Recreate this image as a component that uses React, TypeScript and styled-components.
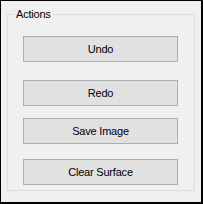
import React from "react";
import styled, { createGlobalStyle } from "styled-components";

const Global = createGlobalStyle`
  html, body { margin: 0; padding: 0; background: #f0f0f0; }
  * { box-sizing: border-box; }
`;

const Window = styled.div`
  width: 203px;
  height: 204px;
  background: #f0f0f0;
  border-style: solid;
  border-color: #000;
  border-width: 1px 2px 2px 1px;
  padding: 13px 6px 0 6px;
  font-family: "Liberation Sans", Arial, sans-serif;
  font-size: 11px;
  letter-spacing: -0.2px;
  color: #000;
`;

const GroupBox = styled.div`
  position: relative;
  width: 188px;
  height: 177px;
  border: 1px solid #dcdcdc;
  display: flex;
  flex-direction: column;
  align-items: flex-start;
  padding: 0 0 0 15px;
`;

const Legend = styled.div`
  position: absolute;
  left: 6px;
  top: -8px;
  padding: 0 2px;
  line-height: 14px;
  background: #f0f0f0;
`;

const Button = styled.button<{ $gap: number }>`
  margin-top: ${(p) => p.$gap}px;
  width: 155px;
  height: 26px;
  padding: 0;
  background: #e1e1e1;
  border: 1px solid #adadad;
  border-radius: 0;
  font-family: inherit;
  font-size: 11px;
  letter-spacing: -0.2px;
  line-height: 24px;
  color: #000;
  text-align: center;
`;

export default function App() {
  return (
    <>
      <Global />
      <Window>
        <GroupBox>
          <Legend>Actions</Legend>
          <Button $gap={21}>Undo</Button>
          <Button $gap={18}>Redo</Button>
          <Button $gap={12}>Save Image</Button>
          <Button $gap={15}>Clear Surface</Button>
        </GroupBox>
      </Window>
    </>
  );
}
